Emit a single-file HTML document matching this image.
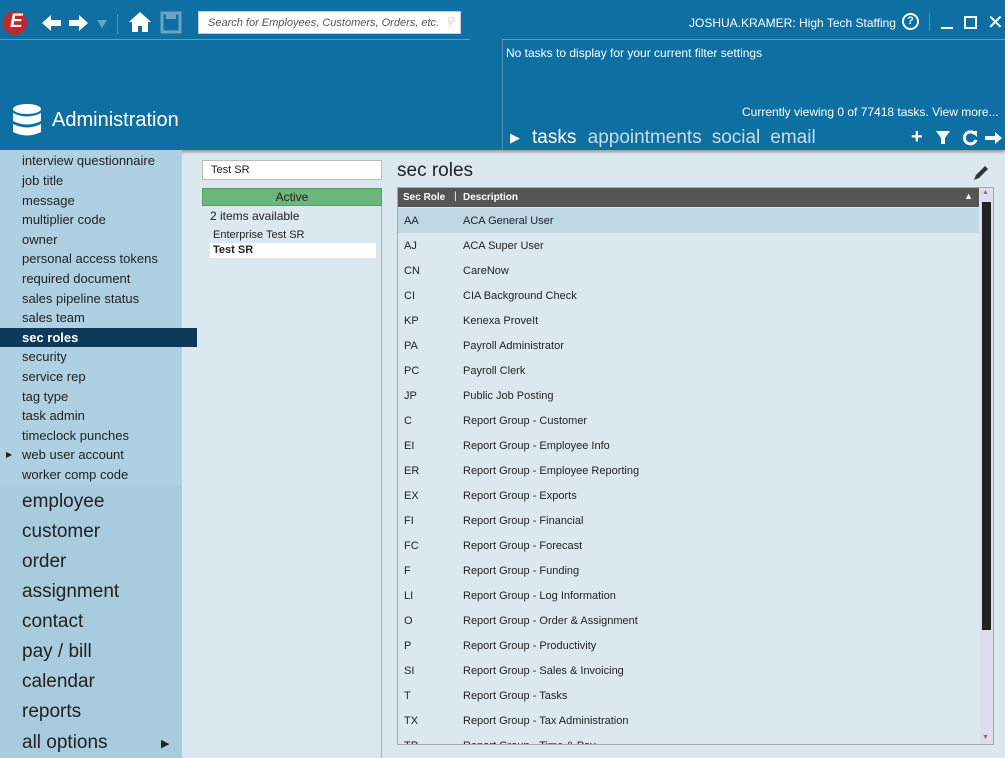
<!DOCTYPE html>
<html><head><meta charset="utf-8"><style>
*{margin:0;padding:0;box-sizing:border-box}
body{width:1005px;height:758px;overflow:hidden;background:#dbe8f0;font-family:"Liberation Sans",sans-serif;position:relative}
.abs{position:absolute}
#top{left:0;top:0;width:1005px;height:150px;background:#0e6fa3;box-shadow:0 2px 3px rgba(0,0,0,.35)}
.w{color:#fff}
#side{left:0;top:150px;width:182px;height:608px;background:#a9cbde}
#sub{left:0;top:150px;width:182px;height:335px;background:#aed0e2}
.si{position:absolute;left:22px;font-size:13px;color:#222}
.bi{position:absolute;left:22px;font-size:19px;color:#222}
.row{position:absolute;left:398px;width:581px;height:25px;font-family:"Liberation Sans",sans-serif;font-size:11px;color:#222}
.row span{position:absolute;top:7px}
</style></head><body>
<div id="top" class="abs">
 <div class="abs" style="left:0;top:39px;width:470px;height:1px;background:#5a9cc4"></div>
 <div class="abs" style="left:502px;top:39px;width:503px;height:1px;background:#5a9cc4"></div>
 <div class="abs" style="left:502px;top:40px;width:1px;height:110px;background:#4a8ab5"></div>
 <div class="abs" style="left:3px;top:11px;width:24px;height:24px;border-radius:50%;background:#c0282e"></div>
 <div class="abs w" style="left:10px;top:11px;font:italic bold 19px 'Liberation Sans';">E</div>
 <svg class="abs" style="left:40px;top:12px" width="80" height="22"><path d="M2 11 L11 3 L11 8 L21 8 L21 14 L11 14 L11 19Z" fill="#fff"/><path d="M48 11 L39 3 L39 8 L29 8 L29 14 L39 14 L39 19Z" fill="#fff"/><path d="M57 8 L67 8 L62 16Z" fill="#6aa3c6"/><rect x="77" y="2" width="1" height="20" fill="#4e91bb"/></svg>
 <svg class="abs" style="left:128px;top:10px" width="60" height="24"><path d="M12 2 L1 12 L4 12 L4 22 L10 22 L10 16 L14 16 L14 22 L20 22 L20 12 L23 12Z" fill="#fff"/><rect x="34" y="3" width="18" height="19" fill="none" stroke="#6aa3c6" stroke-width="3"/><rect x="38" y="3" width="10" height="6" fill="#6aa3c6"/></svg>
 <div class="abs" style="left:198px;top:11px;width:263px;height:23px;background:#fff;border:1px solid #ccc;font:italic 11px 'Liberation Sans';color:#555;padding:5px 0 0 9px">Search for Employees, Customers, Orders, etc.<span style="position:absolute;right:6px;top:3px;color:#ccc">&#9906;</span></div>
 <div class="abs w" style="left:689px;top:16px;font-size:12px">JOSHUA.KRAMER: High Tech Staffing</div>
 <div class="abs w" style="left:902px;top:13px;width:17px;height:17px;border:2px solid #fff;border-radius:50%;font:bold 11px 'Liberation Sans';text-align:center;line-height:13px">?</div>
 <div class="abs" style="left:929px;top:13px;width:1px;height:18px;background:#4e91bb"></div>
 <div class="abs" style="left:941px;top:27px;width:12px;height:2px;background:#fff"></div>
 <div class="abs" style="left:964px;top:16px;width:13px;height:13px;border:2px solid #fff"></div>
 <div class="abs w" style="left:987px;top:10px;font-size:20px">&#10005;</div>
 <div class="abs w" style="left:506px;top:46px;font-size:12px">No tasks to display for your current filter settings</div>
 <div class="abs w" style="left:742px;top:105px;font-size:12px">Currently viewing 0 of 77418 tasks. View more...</div>
 <div class="abs w" style="left:510px;top:130px;font-size:13px">&#9654;</div>
 <div class="abs" style="left:532px;top:127px;font-size:19px;color:#fff">tasks <span style="color:#c9dcea;margin-left:6px">appointments</span><span style="color:#c9dcea;margin-left:10px">social</span><span style="color:#c9dcea;margin-left:10px">email</span></div>
 <div class="abs w" style="left:911px;top:126px;font:bold 20px 'Liberation Sans'">+</div>
 <svg class="abs" style="left:935px;top:129px" width="70" height="18"><path d="M1 2 L15 2 L10 9 L10 15 L6 15 L6 9Z" fill="#fff"/><path d="M40 5 A6 6 0 1 0 41 11" stroke="#fff" stroke-width="3" fill="none"/><path d="M36 2 L42 2 L42 8Z" fill="#fff"/><path d="M50 7 L60 7 L60 3 L67 9 L60 15 L60 11 L50 11Z" fill="#fff"/></svg>
 <svg class="abs" style="left:12px;top:104px" width="30" height="33"><ellipse cx="15" cy="5" rx="14" ry="5" fill="#fff"/><path d="M1 9 Q15 16 29 9 L29 17 Q15 24 1 17Z" fill="#fff"/><path d="M1 20 Q15 27 29 20 L29 28 Q15 35 1 28Z" fill="#fff"/></svg>
 <div class="abs w" style="left:52px;top:109px;font-size:20px">Administration</div>
</div>
<div id="side" class="abs"></div>
<div id="sub" class="abs"></div>
<div class="abs" style="left:0;top:328px;width:197px;height:19px;background:#0d3a5b"></div>
<div class="si" style="top:153px">interview questionnaire</div>
<div class="si" style="top:173px">job title</div>
<div class="si" style="top:193px">message</div>
<div class="si" style="top:212px">multiplier code</div>
<div class="si" style="top:232px">owner</div>
<div class="si" style="top:251px">personal access tokens</div>
<div class="si" style="top:271px">required document</div>
<div class="si" style="top:291px">sales pipeline status</div>
<div class="si" style="top:310px">sales team</div>
<div class="si" style="top:330px;color:#fff;font-weight:bold">sec roles</div>
<div class="si" style="top:349px">security</div>
<div class="si" style="top:369px">service rep</div>
<div class="si" style="top:389px">tag type</div>
<div class="si" style="top:408px">task admin</div>
<div class="si" style="top:428px">timeclock punches</div>
<div class="si" style="top:447px">web user account</div>
<div class="abs" style="left:6px;top:450px;font-size:8px;color:#222">&#9654;</div>
<div class="si" style="top:467px">worker comp code</div>
<div class="bi" style="top:491px">employee</div>
<div class="bi" style="top:521px">customer</div>
<div class="bi" style="top:551px">order</div>
<div class="bi" style="top:581px">assignment</div>
<div class="bi" style="top:611px">contact</div>
<div class="bi" style="top:641px">pay / bill</div>
<div class="bi" style="top:671px">calendar</div>
<div class="bi" style="top:701px">reports</div>
<div class="bi" style="top:732px">all options</div>
<div class="abs" style="left:161px;top:737px;font-size:11px;color:#222">&#9654;</div>

<div class="abs" style="left:202px;top:160px;width:180px;height:20px;background:#fff;border:1px solid #bbb;font-size:11px;padding:3px 0 0 8px;color:#222">Test SR</div>
<div class="abs" style="left:202px;top:188px;width:180px;height:18px;background:#6bb67a;border:1px solid #5a9e67;font-size:12px;text-align:center;line-height:16px;color:#222">Active</div>
<div class="abs" style="left:381px;top:206px;width:1px;height:552px;background:#aab"></div>
<div class="abs" style="left:210px;top:209px;font-size:12px;color:#222">2 items available</div>
<div class="abs" style="left:213px;top:229px;font-size:11px;color:#222">Enterprise Test SR</div>
<div class="abs" style="left:210px;top:243px;width:166px;height:15px;background:#fff"></div>
<div class="abs" style="left:213px;top:244px;font-size:11px;font-weight:bold;color:#222">Test SR</div>

<div class="abs" style="left:397px;top:160px;font-size:19px;color:#222">sec roles</div>
<svg class="abs" style="left:972px;top:164px" width="18" height="18"><path d="M2 16 L4 11 L13 2 L16 5 L7 14Z" fill="#333"/></svg>
<div class="abs" style="left:397px;top:187px;width:597px;height:558px;border:1px solid #aaa"></div>
<div class="abs" style="left:398px;top:188px;width:581px;height:19px;background:#555;color:#fff;font-size:10px;font-weight:bold"><span style="position:absolute;left:5px;top:4px">Sec Role</span><span style="position:absolute;left:56px;top:3px;font-weight:normal">|</span><span style="position:absolute;left:65px;top:4px">Description</span><span style="position:absolute;right:6px;top:3px;font-size:9px">&#9650;</span></div>
<div class="abs" style="left:980px;top:188px;width:13px;height:556px;background:#dde"></div>
<div class="abs" style="left:982px;top:202px;width:9px;height:428px;background:#222"></div>
<div class="abs" style="left:982px;top:189px;font-size:7px;color:#777">&#9650;</div>
<div class="abs" style="left:982px;top:734px;font-size:7px;color:#777">&#9660;</div>
<div class="row" style="top:208px;background:#bed8e6"><span style="left:6px">AA</span><span style="left:65px">ACA General User</span></div>
<div class="row" style="top:233px"><span style="left:6px">AJ</span><span style="left:65px">ACA Super User</span></div>
<div class="row" style="top:258px"><span style="left:6px">CN</span><span style="left:65px">CareNow</span></div>
<div class="row" style="top:283px"><span style="left:6px">CI</span><span style="left:65px">CIA Background Check</span></div>
<div class="row" style="top:308px"><span style="left:6px">KP</span><span style="left:65px">Kenexa ProveIt</span></div>
<div class="row" style="top:333px"><span style="left:6px">PA</span><span style="left:65px">Payroll Administrator</span></div>
<div class="row" style="top:358px"><span style="left:6px">PC</span><span style="left:65px">Payroll Clerk</span></div>
<div class="row" style="top:383px"><span style="left:6px">JP</span><span style="left:65px">Public Job Posting</span></div>
<div class="row" style="top:408px"><span style="left:6px">C</span><span style="left:65px">Report Group - Customer</span></div>
<div class="row" style="top:433px"><span style="left:6px">EI</span><span style="left:65px">Report Group - Employee Info</span></div>
<div class="row" style="top:458px"><span style="left:6px">ER</span><span style="left:65px">Report Group - Employee Reporting</span></div>
<div class="row" style="top:483px"><span style="left:6px">EX</span><span style="left:65px">Report Group - Exports</span></div>
<div class="row" style="top:508px"><span style="left:6px">FI</span><span style="left:65px">Report Group - Financial</span></div>
<div class="row" style="top:533px"><span style="left:6px">FC</span><span style="left:65px">Report Group - Forecast</span></div>
<div class="row" style="top:558px"><span style="left:6px">F</span><span style="left:65px">Report Group - Funding</span></div>
<div class="row" style="top:583px"><span style="left:6px">LI</span><span style="left:65px">Report Group - Log Information</span></div>
<div class="row" style="top:608px"><span style="left:6px">O</span><span style="left:65px">Report Group - Order &amp; Assignment</span></div>
<div class="row" style="top:633px"><span style="left:6px">P</span><span style="left:65px">Report Group - Productivity</span></div>
<div class="row" style="top:658px"><span style="left:6px">SI</span><span style="left:65px">Report Group - Sales &amp; Invoicing</span></div>
<div class="row" style="top:683px"><span style="left:6px">T</span><span style="left:65px">Report Group - Tasks</span></div>
<div class="row" style="top:708px"><span style="left:6px">TX</span><span style="left:65px">Report Group - Tax Administration</span></div>
<div class="row" style="top:733px;height:11px;overflow:hidden"><span style="left:6px">TP</span><span style="left:65px">Report Group - Time &amp; Pay</span></div>
</body></html>
